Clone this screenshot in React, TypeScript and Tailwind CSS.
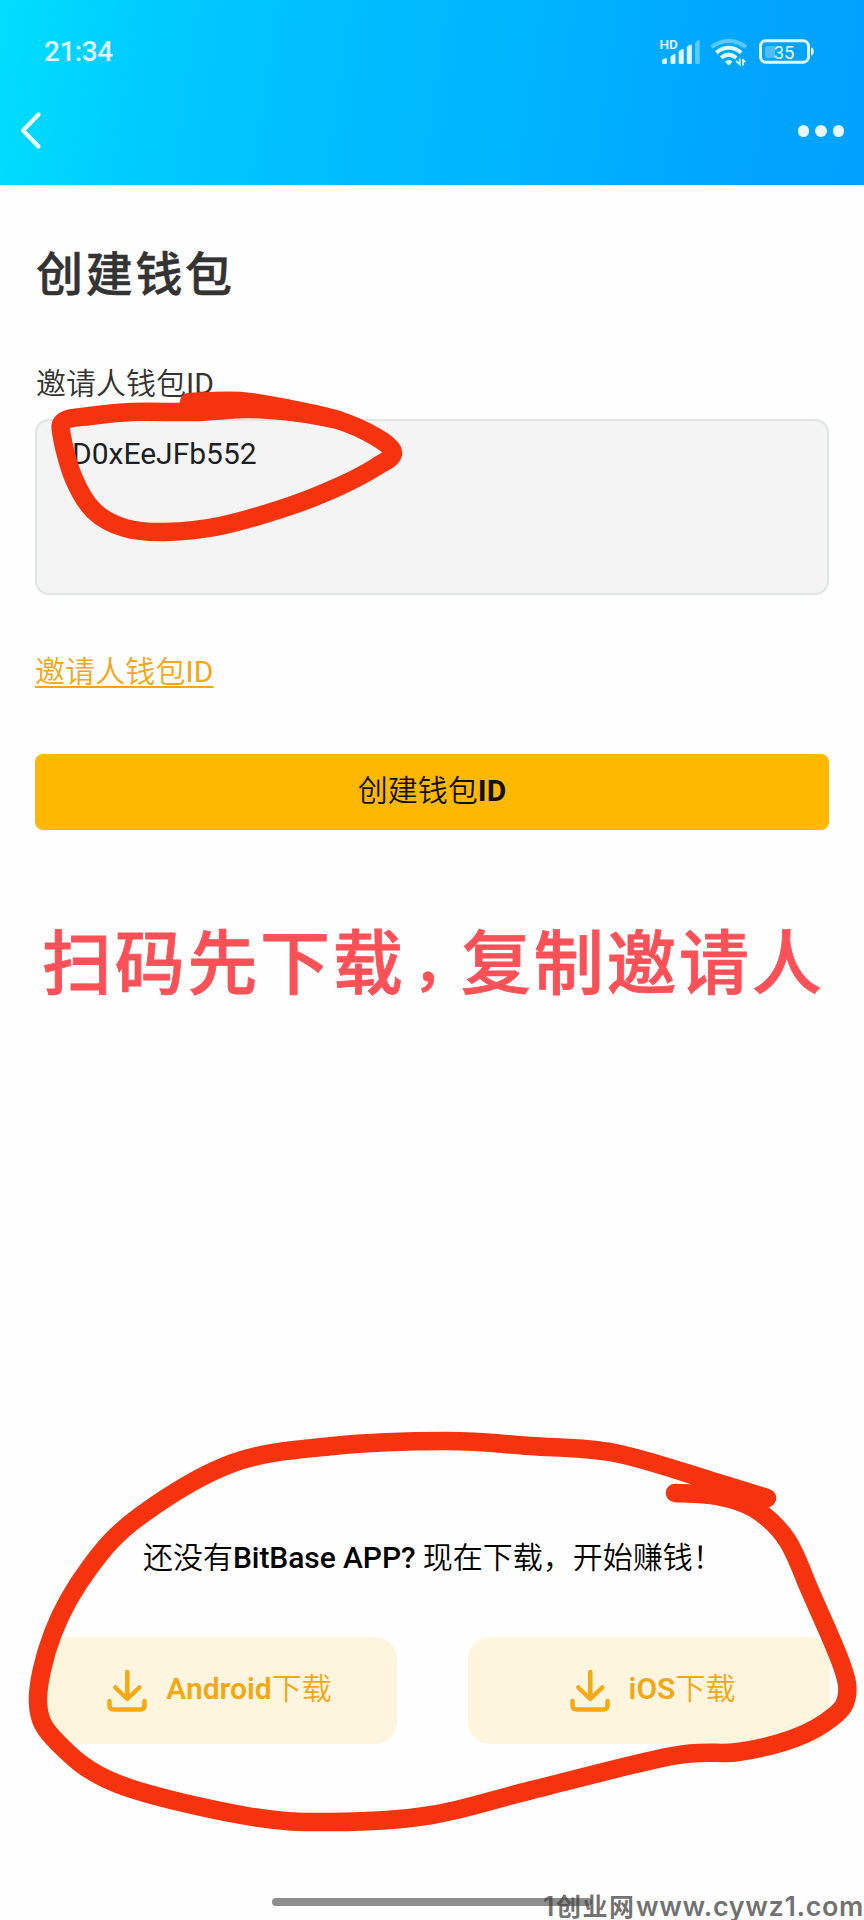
import React from "react";

type Point = [number, number];

function smoothPath(points: Point[]): string {
  let d = `M${points[0][0]} ${points[0][1]}`;
  for (let i = 0; i < points.length - 1; i++) {
    const p0 = points[Math.max(i - 1, 0)];
    const p1 = points[i];
    const p2 = points[i + 1];
    const p3 = points[Math.min(i + 2, points.length - 1)];
    d += ` C${p1[0] + (p2[0] - p0[0]) / 6} ${p1[1] + (p2[1] - p0[1]) / 6} ${p2[0] - (p3[0] - p1[0]) / 6} ${p2[1] - (p3[1] - p1[1]) / 6} ${p2[0]} ${p2[1]}`;
  }
  return d;
}

const inputLoop: Point[] = [
  [189, 402], [240, 401], [290, 409], [338, 420], [376, 437], [393, 453], [376, 467],
  [340, 486], [290, 506], [220, 526], [165, 532], [125, 528], [94, 511], [74, 479],
  [62, 437], [64, 421], [90, 416], [133, 412], [195, 412], [250, 409], [300, 413], [339, 420],
];

const downloadLoop: Point[] = [
  [767, 1498], [712, 1481], [615, 1453], [530, 1446], [447, 1441], [333, 1446],
  [233, 1463], [140, 1516], [90, 1567], [53, 1633], [38, 1703], [58, 1743],
  [118, 1784], [247, 1816], [333, 1822], [432, 1815], [532, 1790], [672, 1756],
  [738, 1752], [795, 1738], [834, 1716], [847, 1695], [841, 1663], [811, 1593],
  [787, 1540], [755, 1509], [717, 1496], [675, 1493],
];

function Marks() {
  return (
    <svg className="pointer-events-none absolute inset-0" width="864" height="1920" viewBox="0 0 864 1920" fill="none" stroke="#f5330f" strokeWidth="18.500" strokeLinecap="round" strokeLinejoin="round">
      <path d={smoothPath(inputLoop)} />
      <path d={smoothPath(downloadLoop)} />
    </svg>
  );
}

function StatusIcons() {
  return (
    <svg width="156" height="32" viewBox="658 35 156 32" fill="none" stroke="#e0fbff">
      <text x="659.500" y="47.500" fontSize="13.500" fontWeight="600" fill="#e0fbff" stroke="none" className="font-['Roboto',sans-serif]">HD</text>
      <g fill="#e0fbff" stroke="none">
        <path d="M662 59.500Q662 58.500 663 58.200L666 57Q667 56.800 667 58V61.500Q667 63 665.500 63H663.500Q662 63 662 61.500Z" />
        <path d="M670.500 56Q670.500 55 671.500 54.500L674.500 53Q675.500 52.700 675.500 54V61.500Q675.500 63 674 63H672Q670.500 63 670.500 61.500Z" />
        <path d="M678.700 51Q678.700 50 679.700 49.500L682.700 48Q683.700 47.700 683.700 49V61.500Q683.700 63 682.200 63H680.200Q678.700 63 678.700 61.500Z" />
        <path d="M686.800 46.500Q686.800 45.500 687.800 45L690.800 43.500Q691.800 43.200 691.800 44.500V61.500Q691.800 63 690.300 63H688.300Q686.800 63 686.800 61.500Z" />
        <path opacity=".4" d="M695 42Q695 41 696 40.500L698.500 39Q699.700 38.600 699.700 40V61.500Q699.700 63 698.200 63H696.500Q695 63 695 61.500Z" />
        <path d="M725 60.500Q728.700 57.500 732.400 60.500L729.700 63.700Q728.700 64.600 727.700 63.700Z" />
        <path d="M742 64.500V58H743.600L746.200 61.300H743.800V64.500Z" />
      </g>
      <path opacity=".4" strokeWidth="4" d="M711.500 46.200Q728.700 33.500 746 46.200" />
      <path strokeWidth="4" d="M716.200 51.600Q728.700 41.800 741.200 51.600" />
      <path strokeWidth="4" d="M721 56.800Q728.700 50.500 736.400 56.800" />
      <path strokeWidth="1.800" d="M739.700 57.500V63.300L736 60" />
      <rect x="760.500" y="39.700" width="48" height="21.600" rx="5.500" strokeWidth="3" />
      <path stroke="none" fill="#4dbdff" d="M767 45H775V57H767Q765 57 765 55V47Q765 45 767 45Z" />
      <path stroke="none" fill="#e0fbff" d="M811 46.500Q813.700 46.500 813.700 50.500T811 54.500Z" />
      <text x="773.700" y="57.700" fontSize="18.500" fill="#e0fbff" stroke="none" className="font-['Roboto',sans-serif]">35</text>
    </svg>
  );
}

function DownloadIcon() {
  return (
    <svg width="42" height="44" viewBox="0 0 42 44" fill="none" stroke="#f5a914" strokeWidth="4.500" strokeLinecap="round" strokeLinejoin="round">
      <path d="M21.300 3V29.500M9.300 18.500L21.300 30L33.300 18.500M3.500 32V36.500Q3.500 40.500 7.500 40.500H34.500Q38.500 40.500 38.500 36.500V32" />
    </svg>
  );
}

function DownloadButton({ platform }: { platform: string }) {
  return (
    <button className="flex h-[107px] w-[362px] items-center justify-center gap-[18px] rounded-[22px] bg-[#fef5df] pl-[6px] text-[30px] leading-[40px] text-[#f2a816]">
      <DownloadIcon />
      <span className="-mt-1 whitespace-nowrap">
        <span className="font-semibold">{platform}</span>
        <span className="font-[350]">下载</span>
      </span>
    </button>
  );
}

export default function App() {
  return (
    <div lang="zh-CN" className="relative flex h-[1920px] w-[864px] flex-col overflow-hidden bg-[#fefefe] font-['Roboto','Noto_Sans_CJK_SC',sans-serif]">
      <header className="flex h-[185px] shrink-0 flex-col bg-[linear-gradient(98deg,#00deff_0%,#00ccff_17%,#00bfff_36%,#00b2ff_64%,#00a5ff_84%,#00a2ff_100%)]">
        <div className="flex h-[103px] items-center justify-between pr-[50px] pl-[44px]">
          <span className="text-[28px] font-medium tracking-[-0.500px] text-[#dffcff]">21:34</span>
          <StatusIcons />
        </div>
        <div className="flex h-[56px] items-center justify-between pr-[20px] pl-[18px]">
          <svg width="26" height="42" viewBox="0 0 26 42" fill="none" stroke="#eefcff" strokeWidth="4.300" strokeLinecap="round" strokeLinejoin="round">
            <path d="M20.500 4.500L5 20.500L20.500 36.500" />
          </svg>
          <div className="flex gap-[6px]">
            <i className="size-[11.500px] rounded-full bg-[#e6f7ff]" />
            <i className="size-[11.500px] rounded-full bg-[#e6f7ff]" />
            <i className="size-[11.500px] rounded-full bg-[#e6f7ff]" />
          </div>
        </div>
      </header>

      <main className="flex flex-1 flex-col px-[35px]">
        <h1 className="mt-[58px] h-[64px] pl-px text-[47px] leading-[64px] font-medium tracking-[2.700px] text-[#333] [-webkit-text-stroke:0.500px_#333]">创建钱包</h1>
        <label className="mt-[57px] h-[40px] pl-px text-[30px] leading-[40px] font-[350] text-[#333]">邀请人钱包<span className="font-normal">ID</span></label>
        <div className="mt-[15px] h-[176px] rounded-[14px] border-2 border-[#dfe4e4] bg-[#f4f4f4] pt-[13px] pl-[35px] text-[30px] leading-[40px] text-[#1d1f24]">D0xEeJFb552</div>
        <a className="mt-[57px] h-[40px] self-start text-[30px] leading-[40px] font-[350] tracking-[0.100px] text-[#f2a816] underline decoration-2 underline-offset-[4px] [text-decoration-skip-ink:none]">邀请人钱包<span className="font-normal">ID</span></a>
        <button className="mt-[62px] h-[76px] rounded-[8px] bg-[#ffb800] pb-[2px] text-[30px] leading-[40px] text-[#111]">
          <span className="font-[350]">创建钱包</span><span className="font-bold">ID</span>
        </button>
        <div className="mt-[85px] flex h-[100px] pl-[7px] text-[70px] leading-[100px] font-medium tracking-[2.700px] whitespace-nowrap text-[#fa5158] [-webkit-text-stroke:0.800px_#fa5158]">
          <span className="w-[371px]">扫码先下载</span>
          <span className="w-[48px] text-[58px]">，</span>
          <span>复制邀请人</span>
        </div>
        <p className="mt-[523px] h-[40px] pl-[108px] text-[30px] leading-[40px] whitespace-nowrap text-black">
          <span className="font-[350]">还没有</span><span className="font-medium tracking-[-0.080px]">BitBase APP? </span><span className="font-[350]">现在下载，开始赚钱！</span>
        </p>
        <div className="-mr-px mt-[59px] flex justify-between">
          <DownloadButton platform="Android" />
          <DownloadButton platform="iOS" />
        </div>
      </main>

      <div className="mx-auto mb-[14px] h-[8px] w-[320px] shrink-0 rounded-full bg-[#8e8e8e]" />
      <Marks />
      <div className="absolute top-[1891px] left-[543px] flex items-center font-['Inter','Noto_Sans_CJK_SC',sans-serif] text-[27px] leading-[32px] font-semibold whitespace-nowrap text-[#444]/75">
        <span className="w-[13px]">1</span>
        <span className="w-[80px] text-[25px] font-bold tracking-[1.500px]">创业网</span>
        <span className="tracking-[0.600px]">www.cywz1.com</span>
      </div>
    </div>
  );
}
